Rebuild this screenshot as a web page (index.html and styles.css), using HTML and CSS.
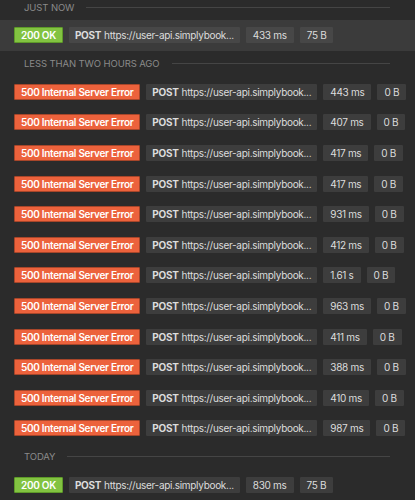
FILE: index.html
```html
<!DOCTYPE html>
<html>
<head>
<meta charset="utf-8">
<link rel="stylesheet" href="styles.css">
</head>
<body>
<div class="list">
  <div class="group-head first"><span class="group-title">Just now</span><span class="group-line"></span></div>
  <div class="row active">
    <span class="status ok">200 OK</span>
    <span class="cell url"><b>POST</b> https://user-api.simplybook...</span>
    <span class="cell">433 ms</span>
    <span class="cell">75 B</span>
  </div>

  <div class="group-head"><span class="group-title">Less than two hours ago</span><span class="group-line"></span></div>
  <div class="row"><span class="status err">500 Internal Server Error</span><span class="cell url"><b>POST</b> https://user-api.simplybook...</span><span class="cell">443 ms</span><span class="cell">0 B</span></div>
  <div class="row"><span class="status err">500 Internal Server Error</span><span class="cell url"><b>POST</b> https://user-api.simplybook...</span><span class="cell">407 ms</span><span class="cell">0 B</span></div>
  <div class="row"><span class="status err">500 Internal Server Error</span><span class="cell url"><b>POST</b> https://user-api.simplybook...</span><span class="cell">417 ms</span><span class="cell">0 B</span></div>
  <div class="row"><span class="status err">500 Internal Server Error</span><span class="cell url"><b>POST</b> https://user-api.simplybook...</span><span class="cell">417 ms</span><span class="cell">0 B</span></div>
  <div class="row"><span class="status err">500 Internal Server Error</span><span class="cell url"><b>POST</b> https://user-api.simplybook...</span><span class="cell">931 ms</span><span class="cell">0 B</span></div>
  <div class="row"><span class="status err">500 Internal Server Error</span><span class="cell url"><b>POST</b> https://user-api.simplybook...</span><span class="cell">412 ms</span><span class="cell">0 B</span></div>
  <div class="row"><span class="status err">500 Internal Server Error</span><span class="cell url"><b>POST</b> https://user-api.simplybook...</span><span class="cell">1.61 s</span><span class="cell">0 B</span></div>
  <div class="row"><span class="status err">500 Internal Server Error</span><span class="cell url"><b>POST</b> https://user-api.simplybook...</span><span class="cell">963 ms</span><span class="cell">0 B</span></div>
  <div class="row"><span class="status err">500 Internal Server Error</span><span class="cell url"><b>POST</b> https://user-api.simplybook...</span><span class="cell">411 ms</span><span class="cell">0 B</span></div>
  <div class="row"><span class="status err">500 Internal Server Error</span><span class="cell url"><b>POST</b> https://user-api.simplybook...</span><span class="cell">388 ms</span><span class="cell">0 B</span></div>
  <div class="row"><span class="status err">500 Internal Server Error</span><span class="cell url"><b>POST</b> https://user-api.simplybook...</span><span class="cell">410 ms</span><span class="cell">0 B</span></div>
  <div class="row"><span class="status err">500 Internal Server Error</span><span class="cell url"><b>POST</b> https://user-api.simplybook...</span><span class="cell">987 ms</span><span class="cell">0 B</span></div>

  <div class="group-head"><span class="group-title">Today</span><span class="group-line"></span></div>
  <div class="row">
    <span class="status ok">200 OK</span>
    <span class="cell url"><b>POST</b> https://user-api.simplybook...</span>
    <span class="cell">830 ms</span>
    <span class="cell">75 B</span>
  </div>
</div>
</body>
</html>
```

FILE: styles.css
```css
html, body {
  margin: 0;
  padding: 0;
  background: #2b2b2b;
  height: 100%;
  overflow: hidden;
}

.list {
  font-family: Inter, "Liberation Sans", sans-serif;
  font-size: 10px;
  letter-spacing: -0.3px;
  color: #dcdcdc;
  margin-top: -6px;
}

.group-head {
  height: 26px;
  display: flex;
  align-items: center;
  gap: 12px;
  padding: 0 25px 0 24px;
}

.group-title {
  text-transform: uppercase;
  color: #8a8a8a;
  font-size: 9.5px;
  letter-spacing: -0.1px;
  white-space: nowrap;
}

.group-line {
  flex: 1;
  height: 1px;
  background: #454545;
}

.row {
  height: 30.6px;
  display: flex;
  align-items: center;
  gap: 6px;
  padding-left: 14px;
}

.row.active {
  background: #3b3b3b;
}

.status {
  height: 16px;
  box-sizing: border-box;
  display: flex;
  align-items: center;
  padding: 0 6px;
  border-radius: 1px;
  color: #fff;
  font-weight: 600;
  white-space: nowrap;
}

.status.ok {
  background: #82c341;
  border: 1px solid #5e9a29;
}

.status.err {
  background: #ec623c;
  border: 1px solid #a8462a;
}

.cell {
  height: 16px;
  display: flex;
  align-items: center;
  padding: 0 7px;
  background: #3d3d3d;
  border-radius: 1px;
  white-space: nowrap;
}

.row.active .cell {
  background: #474747;
}

.cell.url {
  padding: 0 6px;
}

.cell.url b {
  font-weight: 700;
  margin-right: 3px;
}
```
